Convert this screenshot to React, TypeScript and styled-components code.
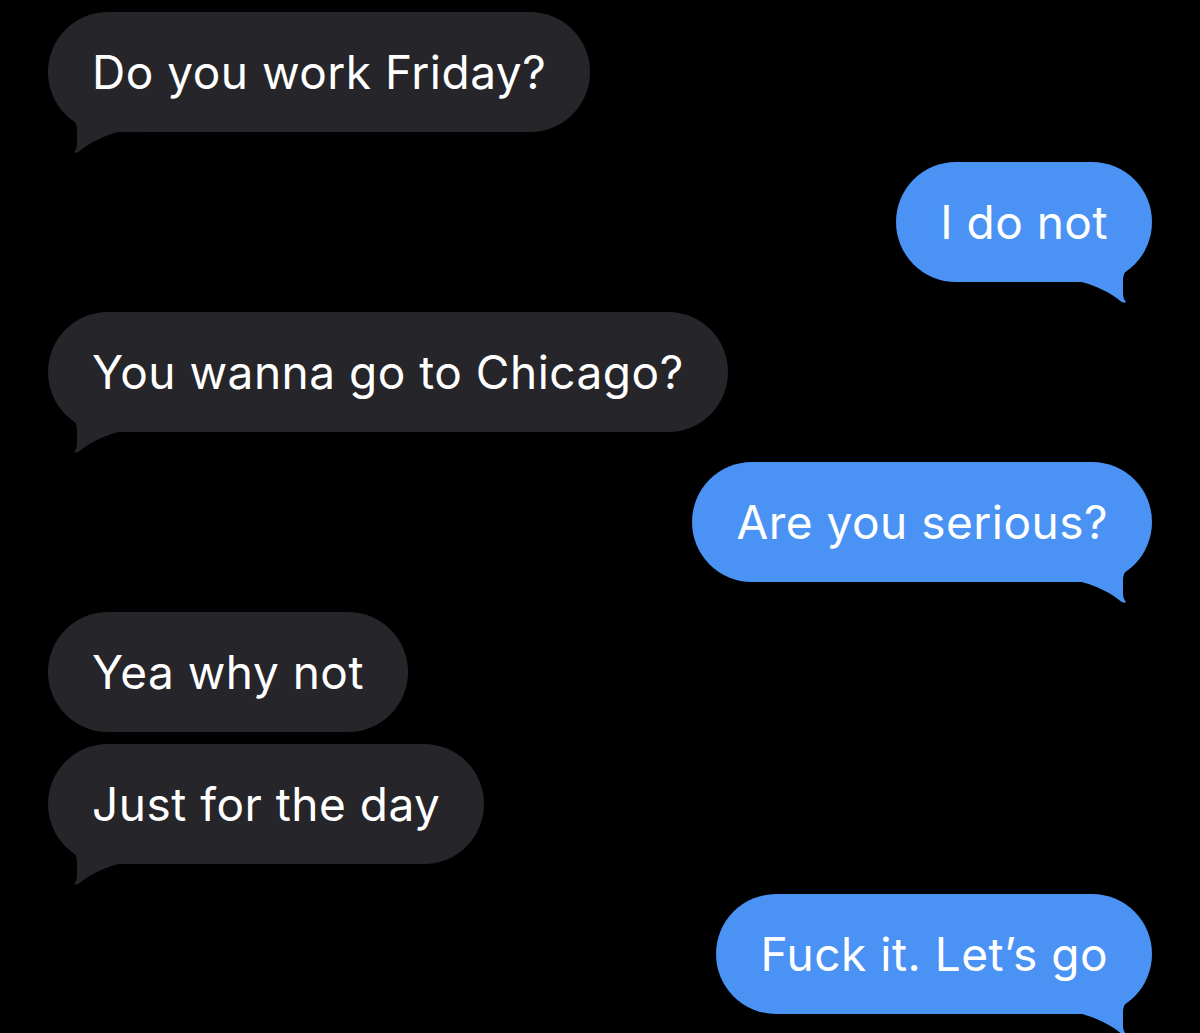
import React, { FunctionComponent } from "react";
import styled, { createGlobalStyle } from "styled-components";

type Side = "in" | "out";

interface Message {
  side: Side;
  text: string;
  tail: boolean;
  grouped?: boolean;
}

const messages: Message[] = [
  { side: "in", text: "Do you work Friday?", tail: true },
  { side: "out", text: "I do not", tail: true },
  { side: "in", text: "You wanna go to Chicago?", tail: true },
  { side: "out", text: "Are you serious?", tail: true },
  { side: "in", text: "Yea why not", tail: false },
  { side: "in", text: "Just for the day", tail: true, grouped: true },
  { side: "out", text: "Fuck it. Let\u2019s go", tail: true },
];

const GRAY = "#262529";
const BLUE = "#4a93f5";

// svg top sits 72px below the bubble top, so the tail tip lands ~20px under it
const Tail: FunctionComponent<{ side: Side }> = ({ side }) => (
  <TailSvg $side={side} width="96" height="70" viewBox="0 0 96 70">
    <path
      d="M7 0 L7 16 A60 60 0 0 0 27 38 C29 42 29 44 29 48 L29 59 C29 63 28 66 26 68 Q28 69.5 31 67.5 C36 63 41 60 48 56.5 C55 53 62 50 72 47.5 L96 47.5 L96 0 Z"
      fill={side === "in" ? GRAY : BLUE}
    />
  </TailSvg>
);

const Bubble: FunctionComponent<{ message: Message }> = ({ message }) => (
  <Row $side={message.side} $grouped={!!message.grouped}>
    <BubbleBox $side={message.side}>
      {message.tail && <Tail side={message.side} />}
      <Label>{message.text}</Label>
    </BubbleBox>
  </Row>
);

export default function App() {
  return (
    <>
      <GlobalStyle />
      <Thread>
        {messages.map((m, i) => (
          <Bubble key={i} message={m} />
        ))}
      </Thread>
    </>
  );
}

const GlobalStyle = createGlobalStyle`
  html, body {
    margin: 0;
    background: #000;
  }
  body {
    width: 1200px;
    height: 1033px;
    overflow: hidden;
  }
`;

const Thread = styled.div`
  display: flex;
  flex-direction: column;
  padding: 12px 48px 0;
  font-family: Inter, "Noto Sans", sans-serif;
`;

const Row = styled.div<{ $side: Side; $grouped: boolean }>`
  display: flex;
  justify-content: ${(p) => (p.$side === "in" ? "flex-start" : "flex-end")};
  margin-top: ${(p) => (p.$grouped ? "12px" : "30px")};

  &:first-child {
    margin-top: 0;
  }
`;

const BubbleBox = styled.div<{ $side: Side }>`
  position: relative;
  height: 120px;
  display: flex;
  align-items: center;
  padding: 0 44px;
  border-radius: 60px;
  background: ${(p) => (p.$side === "in" ? GRAY : BLUE)};
  color: #fff;
  font-size: 46px;
  letter-spacing: 0.5px;
  white-space: nowrap;
`;

const Label = styled.span`
  position: relative;
  z-index: 1;
`;

const TailSvg = styled.svg<{ $side: Side }>`
  position: absolute;
  top: 72px;
  ${(p) => (p.$side === "in" ? "left: 0;" : "right: 0; transform: scaleX(-1);")}
`;
